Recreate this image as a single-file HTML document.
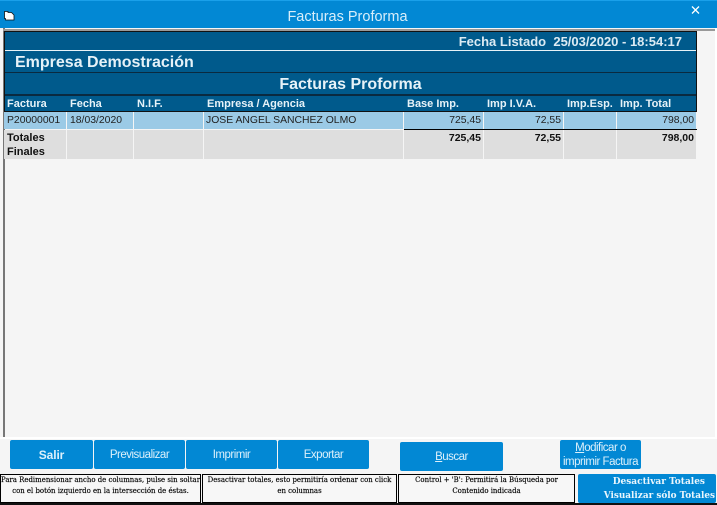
<!DOCTYPE html>
<html><head><meta charset="utf-8">
<style>
html,body{margin:0;padding:0}
body{width:717px;height:505px;position:relative;overflow:hidden;background:#f5f5f5;font-family:"Liberation Sans",sans-serif}
.a{position:absolute;white-space:nowrap;box-sizing:border-box}
.h{color:#e6f2f8;font-weight:bold;font-size:11px;top:96px;height:15px;line-height:16px;background:#005a8c;padding-left:3px}
.c{top:112px;height:17px;line-height:16px;padding-top:1px;font-size:10.4px;background:#9bcae6;color:#222;padding-left:3px;padding-right:3px}
.t{top:130px;height:29px;background:#dedede;font-size:10.5px;font-weight:bold;color:#111;padding:0 3px;line-height:16px}
.r{text-align:right;padding-right:2px}
.b{background:#0288d4;color:#dcf0fb;font-size:11.5px;letter-spacing:-.5px;text-align:center;border-radius:2px;line-height:30px}
.n{font-family:"DejaVu Serif","Liberation Serif",serif;font-size:6.95px;-webkit-text-stroke:.15px #000;color:#000;text-align:center;border:1px solid #000;top:474px;height:29px;line-height:10.5px;padding-top:0;background:#f7f7f7;box-shadow:0 1px 0 #000}
</style></head><body>
<div class="a" style="left:0;top:0;width:717px;height:28px;background:#0288d4;border-top:1px solid #1aa0ea"></div>
<div class="a" style="left:0;top:6px;width:695px;text-align:center;font-size:14.5px;line-height:22px;color:#d8eefa">Facturas Proforma</div>
<svg class="a" style="left:4px;top:11px" width="12" height="10"><path d="M0.5 0.5h3.5v1h3.5l2.5 2.5v5H1.5V7.5H0.5z" fill="#fff" stroke="#111" stroke-width=".8"/></svg>
<svg class="a" style="left:691px;top:5px" width="10" height="10"><path d="M1 1.5L8 8.5M8 1.5L1 8.5" stroke="#fff" stroke-width="1.3"/></svg>

<div class="a" style="left:3px;top:28px;width:2px;height:409px;background:#777"></div>
<div class="a" style="left:3px;top:29px;width:712px;height:2px;background:#999"></div>
<div class="a" style="left:715px;top:28px;width:2px;height:409px;background:#fff"></div>
<div class="a" style="left:4px;top:31px;width:693px;height:1px;background:#111"></div>
<div class="a" style="left:4px;top:32px;width:693px;height:80px;background:#005a8c;border-left:1px solid #111;border-right:1px solid #111;border-bottom:1px solid #111"></div>
<div class="a" style="left:5px;top:50px;width:691px;height:1px;background:#e8f3f8"></div>
<div class="a" style="left:5px;top:72px;width:691px;height:1px;background:#0a2a40"></div>
<div class="a" style="left:5px;top:94px;width:691px;height:2px;background:#0a2a40"></div>

<div class="a" style="right:35px;top:33px;font-size:13px;font-weight:bold;line-height:17px;color:#dcebf3">Fecha Listado&nbsp; 25/03/2020 - 18:54:17</div>
<div class="a" style="left:15px;top:53px;font-size:16px;font-weight:bold;line-height:19px;color:#e6f2f8">Empresa Demostración</div>
<div class="a" style="left:4px;width:693px;text-align:center;top:75px;font-size:16px;font-weight:bold;line-height:19px;color:#e6f2f8">Facturas Proforma</div>

<div class="a h" style="left:5px;width:61px;padding-left:2px">Factura</div>
<div class="a h" style="left:67px;width:66px">Fecha</div>
<div class="a h" style="left:134px;width:69px">N.I.F.</div>
<div class="a h" style="left:204px;width:199px">Empresa / Agencia</div>
<div class="a h" style="left:404px;width:79px">Base Imp.</div>
<div class="a h" style="left:484px;width:79px">Imp I.V.A.</div>
<div class="a h" style="left:564px;width:52px">Imp.Esp.</div>
<div class="a h" style="left:617px;width:79px">Imp. Total</div>

<div class="a c" style="left:4px;width:62px">P20000001</div>
<div class="a c" style="left:67px;width:66px">18/03/2020</div>
<div class="a c" style="left:134px;width:69px"></div>
<div class="a c" style="left:204px;width:199px;padding-left:2px">JOSE ANGEL SANCHEZ OLMO</div>
<div class="a c r" style="left:404px;width:79px">725,45</div>
<div class="a c r" style="left:484px;width:79px">72,55</div>
<div class="a c" style="left:564px;width:52px"></div>
<div class="a c r" style="left:617px;width:79px">798,00</div>
<div class="a" style="left:404px;top:129px;width:293px;height:1px;background:#000"></div>

<div class="a t" style="left:4px;width:62px;font-size:11px;line-height:14px;padding-top:1px">Totales<br>Finales</div>
<div class="a t" style="left:67px;width:66px"></div>
<div class="a t" style="left:134px;width:69px"></div>
<div class="a t" style="left:204px;width:199px"></div>
<div class="a t r" style="left:404px;width:79px">725,45</div>
<div class="a t r" style="left:484px;width:79px">72,55</div>
<div class="a t" style="left:564px;width:52px"></div>
<div class="a t r" style="left:617px;width:79px">798,00</div>

<div class="a" style="left:0;top:437px;width:717px;height:2px;background:#fff"></div>

<div class="a b" style="left:10px;top:440px;width:83px;height:29px;font-weight:bold;font-size:12px;letter-spacing:-.1px">Salir</div>
<div class="a b" style="left:94px;top:440px;width:91px;height:29px">Previsualizar</div>
<div class="a b" style="left:186px;top:440px;width:91px;height:29px">Imprimir</div>
<div class="a b" style="left:278px;top:440px;width:91px;height:29px">Exportar</div>
<div class="a b" style="left:400px;top:442px;width:103px;height:29px"><u>B</u>uscar</div>
<div class="a b" style="left:560px;top:440px;width:81px;height:29px;line-height:14px;padding-top:1px"><u>M</u>odificar o<br>imprimir Factura</div>

<div class="a n" style="left:0;width:201px">Para Redimensionar ancho de columnas, pulse sin soltar<br>con el botón izquierdo en la intersección de éstas.</div>
<div class="a n" style="left:202px;width:195px">Desactivar totales, esto permitiría ordenar con click<br>en columnas</div>
<div class="a n" style="left:398px;width:177px">Control + 'B': Permitirá la Búsqueda por<br>Contenido indicada</div>
<div class="a" style="left:578px;top:474px;width:138px;height:29px;background:#0288d4;border-radius:2px"></div>
<div class="a" style="left:578px;width:136px;top:475px;text-align:right;padding-right:9px;font-family:'DejaVu Serif',serif;font-weight:bold;font-size:9px;line-height:14px;color:#eaf6fd">Desactivar Totales</div>
<div class="a" style="left:578px;width:138px;top:489px;text-align:right;padding-right:1px;font-family:'DejaVu Serif',serif;font-weight:bold;font-size:8.9px;line-height:14px;color:#eaf6fd">Visualizar sólo Totales</div>
<div class="a" style="left:0;top:503px;width:717px;height:2px;background:#111"></div>
</body></html>
